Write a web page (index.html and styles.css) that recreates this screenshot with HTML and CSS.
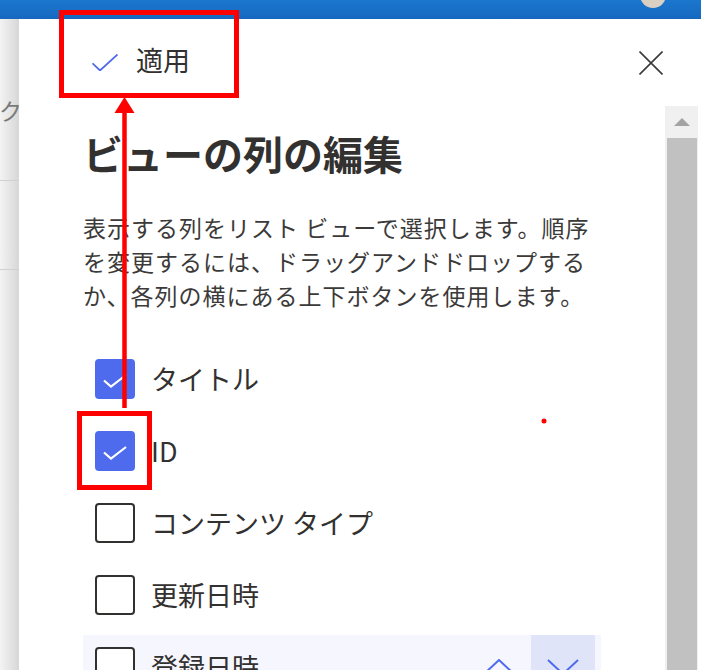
FILE: index.html
```html
<!DOCTYPE html>
<html lang="ja">
<head>
<meta charset="utf-8">
<title>ビューの列の編集</title>
<link rel="stylesheet" href="styles.css">
</head>
<body>
<div class="topbar"><div class="avatar"></div></div>
<div class="main">
  <div class="bgstrip">
    <div class="bg-sec1"><div class="bg-k">ク</div></div>
    <div class="bg-sec2"></div>
  </div>
  <div class="panel">
    <div class="panel-header">
      <button class="apply">
        <svg viewBox="0 0 26 17" width="26" height="17"><polyline points="0.5,9.3 8,16.5 25.5,0.5" fill="none" stroke="#4f6bed" stroke-width="1.8"/></svg>
        <span class="apply-label">適用</span>
      </button>
      <button class="close" aria-label="閉じる">
        <svg viewBox="0 0 24 24" width="24" height="24"><path d="M0.5 0.5 L23.5 23.5 M23.5 0.5 L0.5 23.5" fill="none" stroke="#3b3a39" stroke-width="1.6"/></svg>
      </button>
    </div>
    <div class="panel-body">
      <div class="content">
        <h1 class="title">ビューの列の編集</h1>
        <p class="desc">表示する列をリスト ビューで選択します。順序を変更するには、ドラッグアンドドロップするか、各列の横にある上下ボタンを使用します。</p>
        <ul class="cols">
          <li class="col">
            <span class="cb checked"><svg viewBox="0 0 24 14" width="24" height="14"><polyline points="1,6.5 8,12.5 23,1" fill="none" stroke="#fff" stroke-width="2.2"/></svg></span>
            <span class="label">タイトル</span>
          </li>
          <li class="col">
            <span class="cb checked"><svg viewBox="0 0 24 14" width="24" height="14"><polyline points="1,6.5 8,12.5 23,1" fill="none" stroke="#fff" stroke-width="2.2"/></svg></span>
            <span class="label">ID</span>
          </li>
          <li class="col">
            <span class="cb"></span>
            <span class="label">コンテンツ タイプ</span>
          </li>
          <li class="col">
            <span class="cb"></span>
            <span class="label">更新日時</span>
          </li>
          <li class="col hover">
            <span class="cb"></span>
            <span class="label">登録日時</span>
            <span class="moves">
              <button class="mv"><svg viewBox="0 0 32 16" width="32" height="16"><polyline points="1,15 16,1 31,15" fill="none" stroke="#4f6bed" stroke-width="2"/></svg></button>
              <button class="mv active"><svg viewBox="0 0 32 16" width="32" height="16"><polyline points="1,1 16,15 31,1" fill="none" stroke="#4f6bed" stroke-width="2"/></svg></button>
            </span>
          </li>
        </ul>
      </div>
      <div class="scrollbar">
        <div class="sb-up"><span class="sb-tri"></span></div>
        <div class="sb-thumb"></div>
      </div>
    </div>
  </div>
</div>
<svg class="annot" viewBox="0 0 701 670" width="701" height="670">
  <rect x="61.5" y="12.5" width="175" height="83" fill="none" stroke="#ff0000" stroke-width="5"/>
  <rect x="79.5" y="413.5" width="70" height="74" fill="none" stroke="#ff0000" stroke-width="5"/>
  <line x1="124.5" y1="110" x2="124.5" y2="408" stroke="#ff0000" stroke-width="4.5"/>
  <polygon points="124.5,97 114.5,113 134.5,113" fill="#ff0000"/>
  <circle cx="544" cy="421" r="2.5" fill="#ff0000"/>
</svg>
</body>
</html>
```
FILE: styles.css
```css
* {
  box-sizing: border-box;
  margin: 0;
  padding: 0;
}

body {
  width: 701px;
  height: 670px;
  overflow: hidden;
  position: relative;
  background: #fff;
  color: #323130;
  font-family: "Noto Sans CJK JP", "Noto Sans", sans-serif;
}

.topbar {
  height: 19px;
  background: linear-gradient(#1b77ce, #1668bf);
  display: flex;
  justify-content: flex-end;
  padding-right: 35px;
  overflow: hidden;
}

.avatar {
  width: 26px;
  height: 26px;
  border-radius: 50%;
  background: #d9cfc3;
  margin-top: -18px;
}

.main {
  display: flex;
  height: 651px;
}

.bgstrip {
  width: 19px;
  flex-shrink: 0;
  overflow: hidden;
  background: linear-gradient(to right, #f3f3f3, #d7d7d7);
}

.bg-sec1 {
  height: 162px;
  border-bottom: 1px solid #d0d0d0;
  padding-top: 76px;
}

.bg-k {
  font-size: 23px;
  line-height: 30px;
  color: #7a7a7a;
  margin-left: -1px;
  white-space: nowrap;
}

.bg-sec2 {
  height: 89px;
  border-bottom: 1px solid #d0d0d0;
}

.panel {
  flex: 1;
  min-width: 0;
  display: flex;
  flex-direction: column;
  background: #fff;
}

.panel-header {
  height: 87px;
  flex-shrink: 0;
  display: flex;
  align-items: center;
  justify-content: space-between;
  padding: 0 38px 0 73px;
}

.apply {
  display: flex;
  align-items: center;
  gap: 18px;
  border: 0;
  background: none;
  font-family: inherit;
  font-size: 27px;
  line-height: 36px;
  color: #323130;
}

.apply svg {
  display: block;
}

.apply-label {
  margin-top: -5px;
}

.close {
  width: 24px;
  height: 24px;
  border: 0;
  background: none;
}

.close svg {
  display: block;
}

.panel-body {
  flex: 1;
  min-height: 0;
  display: flex;
}

.content {
  flex: 1;
  min-width: 0;
  overflow: hidden;
  padding: 21px 64px 0;
}

.title {
  font-size: 40px;
  font-weight: 700;
  line-height: 52px;
  color: #323130;
}

.desc {
  margin-top: 31px;
  font-size: 23px;
  letter-spacing: 1px;
  line-height: 34px;
  color: #3b3a39;
}

.cols {
  list-style: none;
  margin-top: 35px;
  display: flex;
  flex-direction: column;
  gap: 8px;
}

.col {
  height: 64px;
  flex-shrink: 0;
  display: flex;
  align-items: center;
  gap: 16px;
  padding: 0 6px 0 12px;
}

.col.hover {
  background: #f6f7fe;
}

.cb {
  width: 40px;
  height: 40px;
  flex-shrink: 0;
  border: 2px solid #323130;
  border-radius: 4px;
  background: #fff;
  display: flex;
  align-items: center;
  justify-content: center;
}

.cb.checked {
  background: #4f6bed;
  border-color: #4f6bed;
}

.cb svg {
  display: block;
  margin-top: 3px;
}

.label {
  font-size: 27px;
  line-height: 36px;
  color: #323130;
  white-space: nowrap;
}

.moves {
  margin-left: auto;
  display: flex;
  align-self: stretch;
}

.mv {
  width: 64px;
  height: 64px;
  border: 0;
  background: transparent;
  display: flex;
  align-items: center;
  justify-content: center;
}

.mv.active {
  background: #dfe4f9;
}

.mv svg {
  display: block;
}

.scrollbar {
  width: 33px;
  margin-right: 3px;
  flex-shrink: 0;
  background: #f0f0f0;
  display: flex;
  flex-direction: column;
}

.sb-up {
  height: 32px;
  flex-shrink: 0;
  display: flex;
  align-items: center;
  justify-content: center;
}

.sb-tri {
  width: 0;
  height: 0;
  border-left: 8px solid transparent;
  border-right: 8px solid transparent;
  border-bottom: 8px solid #a3a3a3;
}

.sb-thumb {
  flex: 1;
  margin: 0 1px 0 2px;
  background: #c1c1c1;
}

.annot {
  position: absolute;
  top: 0;
  left: 0;
  pointer-events: none;
}
```
